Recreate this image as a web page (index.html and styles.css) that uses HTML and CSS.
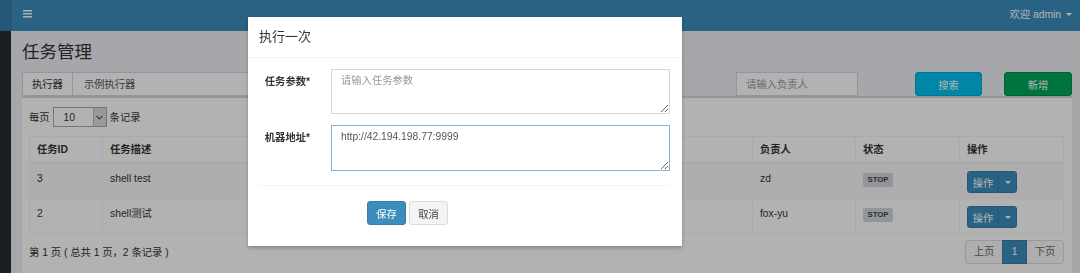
FILE: index.html
```html
<!DOCTYPE html>
<html lang="zh-CN">
<head>
  <meta charset="UTF-8" />
  <meta name="viewport" content="width=device-width, initial-scale=1.0"/>
  <title>任务管理</title>
  <link rel="stylesheet" href="styles.css">
</head>
<body>

  <header class="main-header">
    <a class="logo"></a>
    <nav class="navbar">
      <a class="sidebar-toggle">
        <svg width="9" height="8" viewBox="0 0 9 8">
          <rect x="0" y="0" width="9" height="1.5" fill="#fff"/>
          <rect x="0" y="3" width="9" height="1.5" fill="#fff"/>
          <rect x="0" y="6" width="9" height="1.5" fill="#fff"/>
        </svg>
      </a>
      <div class="user-menu">欢迎 admin <span class="caret"></span></div>
    </nav>
  </header>

  <div class="main">
    <aside class="main-sidebar"></aside>

    <div class="content-wrapper">
      <h1 class="page-title">任务管理</h1>

      <div class="filter-row">
        <div class="input-group">
          <span class="addon">执行器</span>
          <span class="group-select">示例执行器</span>
        </div>
        <input class="form-control author" type="text" placeholder="请输入负责人" />
        <button class="btn btn-info search">搜索</button>
        <button class="btn btn-success add">新增</button>
      </div>

      <div class="box">
        <div class="box-body">
          <div class="length-row">
            每页
            <div class="len-select">
              <span class="len-value">10</span>
              <span class="len-arrow">
                <svg width="7" height="5" viewBox="0 0 7 5"><path d="M0.5 0.8 L3.5 3.8 L6.5 0.8" fill="none" stroke="#555" stroke-width="1.2"/></svg>
              </span>
            </div>
            条记录
          </div>

          <table class="table">
            <colgroup>
              <col style="width:73px"><col style="width:270px"><col style="width:190px"><col style="width:190px">
              <col style="width:103px"><col style="width:104px"><col style="width:104px">
            </colgroup>
            <thead>
              <tr>
                <th>任务ID</th>
                <th>任务描述</th>
                <th>调度类型</th>
                <th>运行模式</th>
                <th>负责人</th>
                <th>状态</th>
                <th>操作</th>
              </tr>
            </thead>
            <tbody>
              <tr class="odd">
                <td>3</td>
                <td>shell test</td>
                <td>CRON：0 0 0 * * ?</td>
                <td>GLUE(Shell)</td>
                <td>zd</td>
                <td><span class="label">STOP</span></td>
                <td>
                  <div class="btn-group">
                    <button class="btn btn-primary btn-xs">操作</button><button class="btn btn-primary btn-xs toggle"><span class="caret"></span></button>
                  </div>
                </td>
              </tr>
              <tr>
                <td>2</td>
                <td>shell测试</td>
                <td>CRON：0 0 0 * * ?</td>
                <td>GLUE(Shell)</td>
                <td>fox-yu</td>
                <td><span class="label">STOP</span></td>
                <td>
                  <div class="btn-group">
                    <button class="btn btn-primary btn-xs">操作</button><button class="btn btn-primary btn-xs toggle"><span class="caret"></span></button>
                  </div>
                </td>
              </tr>
            </tbody>
          </table>

          <div class="table-footer">
            <div class="table-info">第 1 页 ( 总共 1 页，2 条记录 )</div>
            <ul class="pagination">
              <li class="disabled"><a>上页</a></li>
              <li class="active"><a>1</a></li>
              <li class="disabled"><a>下页</a></li>
            </ul>
          </div>
        </div>
      </div>
    </div>
  </div>

  <div class="modal-backdrop"></div>

  <div class="modal">
    <div class="modal-header">
      <h4 class="modal-title">执行一次</h4>
    </div>
    <div class="modal-body">
      <form class="form-horizontal">
        <div class="form-group">
          <label class="control-label">任务参数*</label>
          <textarea class="form-control" rows="2" placeholder="请输入任务参数"></textarea>
        </div>
        <div class="form-group">
          <label class="control-label">机器地址*</label>
          <textarea class="form-control focused" rows="2">http://42.194.198.77:9999</textarea>
        </div>
        <hr class="divider">
        <div class="form-actions">
          <button type="button" class="btn btn-primary">保存</button>
          <button type="button" class="btn btn-default">取消</button>
        </div>
      </form>
    </div>
  </div>

</body>
</html>
```

FILE: styles.css
```css
* {
  box-sizing: border-box;
}

html, body {
  margin: 0;
  height: 100%;
}

body {
  font-family: "Liberation Sans", "Noto Sans CJK SC", sans-serif;
  font-size: 10.3px;
  line-height: 15px;
  color: #333;
  background: #ecf0f5;
  overflow: hidden;
}

/* header */
.main-header {
  display: flex;
  height: 31px;
}

.logo {
  width: 12px;
  background: #367fa9;
}

.navbar {
  flex: 1;
  display: flex;
  justify-content: space-between;
  align-items: flex-start;
  background: #3c8dbc;
  padding: 0 8px 0 11px;
}

.sidebar-toggle {
  margin-top: 10px;
}

.sidebar-toggle svg {
  display: block;
}

.user-menu {
  color: #fff;
  margin-top: 7px;
  display: flex;
  align-items: center;
  gap: 5px;
}

.caret {
  display: inline-block;
  width: 0;
  height: 0;
  border-top: 3px solid #fff;
  border-left: 3px solid transparent;
  border-right: 3px solid transparent;
}

/* layout */
.main {
  display: flex;
  height: calc(100% - 31px);
}

.main-sidebar {
  width: 12px;
  background: #222d32;
}

.content-wrapper {
  flex: 1;
  display: flex;
  flex-direction: column;
  padding: 0 8px 0 11px;
}

.page-title {
  margin: 11px 0 0;
  font-size: 17.5px;
  line-height: 21px;
  font-weight: normal;
}

/* filters */
.filter-row {
  display: flex;
  height: 24px;
  margin-top: 9px;
}

.input-group {
  display: flex;
  width: 263px;
  border: 1px solid #d2d6de;
  background: #fff;
}

.addon {
  padding: 4px 9px 0 9px;
  border-right: 1px solid #d2d6de;
}

.group-select {
  padding: 4px 12px 0 11px;
  color: #555;
}

.form-control {
  font-family: inherit;
  font-size: 10.3px;
  color: #555;
  border: 1px solid #d2d6de;
  background: #fff;
  outline: none;
}

.form-control::placeholder {
  color: #999;
}

.author {
  width: 122px;
  height: 24px;
  margin-left: auto;
  padding: 0 9px;
}

.btn {
  font-family: inherit;
  font-size: 10.3px;
  border: 1px solid transparent;
  border-radius: 3px;
  padding: 0;
  cursor: pointer;
}

.btn-info {
  background: #00c0ef;
  border-color: #00acd6;
  color: #fff;
}

.btn-success {
  background: #00a65a;
  border-color: #008d4c;
  color: #fff;
}

.btn-primary {
  background: #3c8dbc;
  border-color: #367fa9;
  color: #fff;
}

.btn-default {
  background: #f4f4f4;
  border-color: #ddd;
  color: #444;
}

.search {
  width: 67px;
  margin-left: 57px;
}

.add {
  width: 68px;
  margin-left: 22px;
}

/* box */
.box {
  flex: 1;
  min-height: 0;
  overflow: hidden;
  border-top: 2px solid #d2d6de;
  background: #fff;
}

.box-body {
  padding: 9px 8px 0 7px;
}

.length-row {
  display: flex;
  align-items: center;
  gap: 3px;
  height: 20px;
  margin-bottom: 9px;
}

.len-select {
  display: flex;
  width: 54px;
  height: 20px;
  border: 1px solid #a9a9a9;
  background: #fff;
}

.len-value {
  flex: 1;
  padding: 2px 0 0 10px;
}

.len-arrow {
  width: 13px;
  display: flex;
  align-items: center;
  justify-content: center;
  background: #dcdcdc;
  border-left: 1px solid #bbb;
}

/* table */
.table {
  width: 100%;
  border-collapse: collapse;
  table-layout: fixed;
  border: 1px solid #f4f4f4;
}

.table th,
.table td {
  border: 1px solid #f4f4f4;
  text-align: left;
  vertical-align: top;
  white-space: nowrap;
  overflow: hidden;
}

.table th {
  padding: 5px 7px;
  border-bottom-width: 2px;
  font-weight: bold;
}

.table td {
  padding: 7px 7px 5px;
}

.table tr.odd td {
  background: #f9f9f9;
}

.label {
  display: inline-block;
  width: 30px;
  height: 14px;
  margin-top: 1px;
  background: #d2d6de;
  color: #444;
  border-radius: 2px;
  font-size: 7.8px;
  font-weight: bold;
  line-height: 14px;
  text-align: center;
}

.btn-group {
  display: flex;
}

.btn-xs {
  height: 22px;
  width: 32px;
  border-radius: 3px 0 0 3px;
}

.btn-xs.toggle {
  width: 19px;
  margin-left: -1px;
  border-radius: 0 3px 3px 0;
  display: flex;
  align-items: center;
  justify-content: center;
}

.table-footer {
  display: flex;
  justify-content: space-between;
  align-items: center;
  margin-top: 6px;
}

.pagination {
  display: flex;
  list-style: none;
  margin: 0;
  padding: 0;
}

.pagination a {
  display: block;
  width: 38px;
  height: 24px;
  line-height: 22px;
  text-align: center;
  border: 1px solid #ddd;
  background: #fafafa;
  color: #666;
  margin-left: -1px;
}

.pagination li:first-child a {
  border-radius: 3px 0 0 3px;
}

.pagination li:last-child a {
  border-radius: 0 3px 3px 0;
}

.pagination .active a {
  width: 25px;
  background: #3c8dbc;
  border-color: #367fa9;
  color: #fff;
  position: relative;
}

/* modal */
.modal-backdrop {
  position: fixed;
  inset: 0;
  background: rgba(0, 0, 0, 0.3);
}

.modal {
  position: fixed;
  left: 248px;
  top: 17px;
  width: 434px;
  background: #fff;
  box-shadow: 0 2px 4px rgba(0, 0, 0, 0.25);
}

.modal-header {
  padding: 11px;
  border-bottom: 1px solid #f4f4f4;
}

.modal-title {
  margin: 0;
  font-size: 13px;
  line-height: 18px;
  font-weight: normal;
}

.modal-body {
  padding: 11px 12px 21px 11px;
}

.form-group {
  display: grid;
  grid-template-columns: 62px 1fr;
  column-gap: 10px;
  margin-bottom: 11px;
}

.control-label {
  text-align: right;
  padding: 5px 11px 0 0;
  font-weight: bold;
}

.form-group textarea {
  height: 45px;
  padding: 3px 9px;
  line-height: 15px;
  resize: vertical;
}

.form-group textarea.focused {
  height: 46px;
  border-color: #7fb3d5;
}

.divider {
  border: 0;
  border-top: 1px solid #f4f4f4;
  margin: 14px 0 15px;
}

.form-actions {
  display: flex;
  gap: 3px;
  margin-left: 108px;
}

.form-actions .btn {
  width: 39px;
  height: 24px;
}
```
